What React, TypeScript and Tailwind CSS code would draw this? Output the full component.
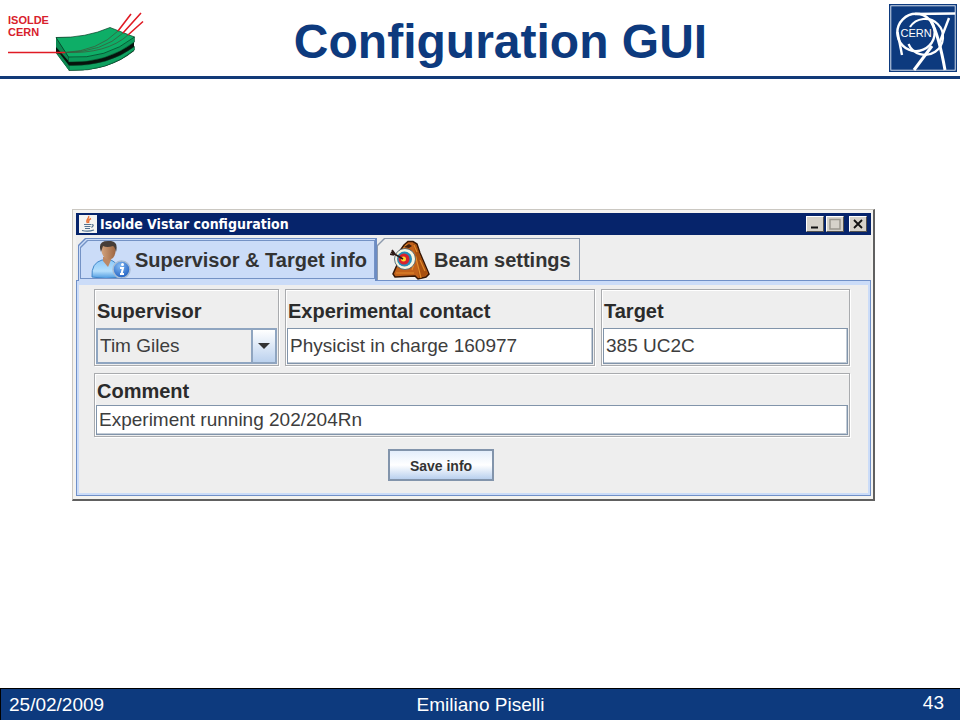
import { useState } from 'react'
import type { ReactNode } from 'react'

function IsoldeLogo() {
  return (
    <div className="relative w-40 shrink-0 pl-2 pt-3.5">
      <div className="font-bold text-[11px] leading-3 text-[#d8202c]">
        ISOLDE<br />CERN
      </div>
      <svg className="absolute left-0 top-0" width="150" height="75" viewBox="0 0 150 75" aria-hidden="true">
        <path d="M56 37.500V53L69 70.500Q108 72 134 51V37Z" fill="#07130c" />
        <path d="M69 65.500V70.500Q108 72 134.500 50V46.500Q108 66.500 69 65.500Z" fill="#0fa160" stroke="#063d24" strokeWidth=".5" />
        <path d="M68.500 57V62Q106 63.500 134.500 42V37Z" fill="#0c9a5a" stroke="#063d24" strokeWidth=".5" />
        <path d="M56 37.500V47L68.500 61V57Z" fill="#0c8a52" />
        <path d="M56 53L69 70.500V65.500L60 54Z" fill="#0c8a52" />
        <path d="M56 37.500Q86 38 110 27.500L134.500 37Q106 59.500 68.500 57Z" fill="#0eae67" stroke="#063d24" strokeWidth=".7" />
        <path d="M65 52.500Q98 51 118 31M65 52.500Q103 52 123 33M65 52.500Q107 54 128 35" fill="none" stroke="#3c5b3c" strokeWidth=".8" />
        <path d="M8 52.500H65M118 31L131 14M123 33L141 13M128 35L143 21.500" fill="none" stroke="#e01b24" strokeWidth="1.600" />
      </svg>
    </div>
  )
}

function CernLogo() {
  return (
    <svg width="68" height="68" viewBox="0 0 68 68" role="img" aria-label="CERN">
      <rect width="68" height="68" fill="#0d3a7e" />
      <rect x="1.800" y="1.800" width="64.400" height="64.400" fill="none" stroke="#e9eef7" strokeWidth=".9" />
      <g fill="none" stroke="#fff" strokeWidth="2.400">
        <circle cx="27" cy="28.500" r="18.700" />
        <path d="M21 23A18 18 0 1 1 19.500 40" strokeWidth="2.200" />
        <path d="M26 10Q42 9.500 66 9.500" />
        <path d="M8.500 28L13 51" />
        <path d="M42 17Q50 32 56 66" strokeWidth="3" />
        <path d="M60 14L50 40" />
        <path d="M43 42L25 66" strokeWidth="3" />
      </g>
      <text x="11.500" y="32.500" fill="#fff" fontSize="11" fontFamily="'Liberation Sans', Arial, sans-serif">CERN</text>
    </svg>
  )
}

function JavaIcon() {
  return (
    <svg width="18" height="18" viewBox="0 0 18 18" className="shrink-0" aria-hidden="true">
      <rect width="18" height="18" fill="#f4f4f2" />
      <path d="M9.500 1C11 3 6 5 8.500 8M12 3.500C8.500 5 10 6 9.500 8" fill="none" stroke="#e8743a" strokeWidth="1.500" />
      <path d="M5 9.500H12M5.500 11.500H11.500M6 13.500H11M12.500 9.500Q16 9.500 12.500 12.500M3 15.500Q9 17 15 15" fill="none" stroke="#53728f" strokeWidth="1.200" />
    </svg>
  )
}

function PersonIcon() {
  return (
    <svg width="40" height="40" viewBox="0 0 40 40" className="shrink-0" aria-hidden="true">
      <defs>
        <linearGradient id="shirt" x1="0" y1="0" x2="0" y2="1">
          <stop offset="0" stopColor="#8cc8f8" />
          <stop offset=".6" stopColor="#b5dffc" />
          <stop offset="1" stopColor="#4a98e0" />
        </linearGradient>
        <linearGradient id="skin" x1="0" y1="0" x2="1" y2="0">
          <stop offset="0" stopColor="#d3a47e" />
          <stop offset="1" stopColor="#9c6440" />
        </linearGradient>
        <radialGradient id="badge" cx=".4" cy=".3" r=".8">
          <stop offset="0" stopColor="#83baf3" />
          <stop offset="1" stopColor="#1555bb" />
        </radialGradient>
      </defs>
      <path d="M1 37Q0 23 11 20H20Q28 23 29 37Q15 40 1 37Z" fill="url(#shirt)" stroke="#4288ca" />
      <path d="M12 17V21L17 27L20 20V16Z" fill="#bc8865" />
      <path d="M11 5Q16 1 24 5Q26 13 22 18Q17 22 13 17Q9 12 11 5Z" fill="url(#skin)" />
      <path d="M10 12Q6 1 17 1Q28 0 25 12Q24 7 22 6Q16 8 12 6Z" fill="#463d38" />
      <circle cx="30.500" cy="29.500" r="8.500" fill="url(#badge)" stroke="#a8bdd4" strokeWidth="1.500" />
      <path d="M29 28H32L30.500 34H33M29 34H30" fill="none" stroke="#fff" strokeWidth="2" />
      <circle cx="31.500" cy="24.500" r="1.500" fill="#fff" />
    </svg>
  )
}

function TargetIcon() {
  return (
    <svg width="40" height="40" viewBox="0 0 40 40" className="shrink-0" aria-hidden="true">
      <path d="M14 5L18 1.500H23L27 4L30 13L33 20L39 34L36 37L28 39L25 36L5 37L3 34L7 25L9 12Z" fill="#c2611a" stroke="#351604" strokeWidth="1.500" />
      <path d="M23 3L26 5L30 15L38 33L35 36L29 38L27 20Z" fill="#a8500f" />
      <path d="M22 30L26 18L31 38M17 4L13 9M24 5L27 12M6 33H24M30 20L35 31" fill="none" stroke="#e28a2a" strokeWidth="1.200" />
      <path d="M14 7L19 4L22 6L19 8Z" fill="#3f2110" />
      <circle cx="15" cy="19" r="10.500" fill="#f8f5df" stroke="#3b5263" strokeWidth=".8" />
      <circle cx="14.500" cy="19" r="7.500" fill="#268db8" />
      <circle cx="14" cy="19" r="5.500" fill="#d9222c" />
      <circle cx="13.500" cy="19" r="2.500" fill="#ffd52c" />
      <path d="M1 12L13 19M0 14L4 15M2 10L5 14" stroke="#2d1a17" strokeWidth="1.700" />
    </svg>
  )
}

const CHAMFER = '[clip-path:polygon(0_7px,7px_0,100%_0,100%_100%,0_100%)]'

interface TabProps {
  selected: boolean
  icon: ReactNode
  label: string
  className: string
  onClick: () => void
}

function Tab({ selected, icon, label, className, onClick }: TabProps) {
  const inner = (
    <span className={`flex h-full items-center gap-1 ${selected ? 'bg-[#cbdcf8] pl-2.5' : 'bg-[#eee] pl-3'} ${CHAMFER}`}>
      {icon}
      <span className="pt-px leading-6">{label}</span>
    </span>
  )
  return (
    <button
      type="button"
      role="tab"
      aria-selected={selected}
      onClick={onClick}
      className={`block shrink-0 pb-0 pl-px pt-px text-[20px] font-bold text-[#333] ${className} ${CHAMFER} ${selected ? 'relative z-10 h-[43px] bg-[#6c8cc4] pr-0.5' : 'h-[42px] bg-[#8d9aad] pr-px'}`}
    >
      {selected ? (
        <span className={`block h-full bg-[#cbdcf8] pl-px pt-px ${CHAMFER}`}>
          <span className={`block h-[39px] bg-[#7492c5] p-px ${CHAMFER}`}>{inner}</span>
        </span>
      ) : inner}
    </button>
  )
}

const GROUP = 'border border-[#a9abae] p-px shadow-[1px_1px_0_#fff,inset_1px_1px_0_#fff]'
const LABEL = 'flex items-center pt-0.5 pl-px text-[20px] font-bold leading-6 text-[#2b2b2b]'
const INPUT = 'block w-full min-w-0 border border-[#8194aa] bg-white px-0.5 text-[19px] text-[#3d3d3d] shadow-[inset_-1px_-1px_0_#c3ccd6] outline-none'

interface FieldProps {
  id: string
  label: string
  value: string
}

function Field({ id, label, value }: FieldProps) {
  return (
    <div className={GROUP}>
      <label htmlFor={id} className={`${LABEL} h-[37px]`}>{label}</label>
      <input id={id} defaultValue={value} className={`${INPUT} h-9`} />
    </div>
  )
}

function WindowButton({ label, children }: { label: string; children: ReactNode }) {
  return (
    <button
      type="button"
      aria-label={label}
      className="flex h-4 w-[18px] items-center justify-center border border-b-[#55524d] border-l-white border-r-[#55524d] border-t-white bg-[#d6d2ca]"
    >
      <svg width="12" height="12" viewBox="0 0 12 12" fill="none" aria-hidden="true">{children}</svg>
    </button>
  )
}

function ConfigWindow() {
  const [tab, setTab] = useState('info')

  return (
    <div className="border-b-2 border-l border-r-2 border-t border-b-[#606060] border-l-[#cbc8c2] border-r-[#606060] border-t-[#cbc8c2] bg-[#f4f3f0] pb-[3px] pl-[3px] pr-0.5 pt-[3px]">
      <div className="flex h-[22px] items-center bg-[#06246b] pl-[3px] pr-1">
        <JavaIcon />
        <h2 className="flex-1 pl-[3px] font-['DejaVu_Sans_Condensed','DejaVu_Sans',sans-serif] text-[14px] font-bold leading-4 text-white">
          Isolde Vistar configuration
        </h2>
        <div className="flex gap-0.5">
          <WindowButton label="Minimize"><path d="M2 9.500H9" stroke="#111" strokeWidth="2" /></WindowButton>
          <WindowButton label="Maximize"><path d="M1 1.500H11V11H1Z" stroke="#9a978e" strokeWidth="1.500" /></WindowButton>
          <span className="w-px" />
          <WindowButton label="Close"><path d="M2 2L10 10M10 2L2 10" stroke="#111" strokeWidth="1.800" /></WindowButton>
        </div>
      </div>

      <div className="bg-[#eee] pt-[3px]">
        <div role="tablist" className="flex h-[42px] items-start pl-0.5">
          <Tab className="w-[299px]" selected={tab === 'info'} icon={<PersonIcon />} label="Supervisor &amp; Target info" onClick={() => setTab('info')} />
          <Tab className="w-[203px]" selected={tab === 'beam'} icon={<TargetIcon />} label="Beam settings" onClick={() => setTab('beam')} />
        </div>

        <div className="border border-[#7090c8] bg-[#eee]">
          <form className="border-x-2 border-b-2 border-t-4 border-[#cbdcf8] pb-3 pl-[15px] pr-[18px] pt-1" onSubmit={(e) => e.preventDefault()}>
            <div className="grid grid-cols-[185fr_310fr_249fr] gap-x-1.5">
              <div className={GROUP}>
                <label htmlFor="supervisor" className={`${LABEL} h-[37px]`}>Supervisor</label>
                <div className="relative">
                  <select
                    id="supervisor"
                    className="block h-9 w-full appearance-none border-2 border-[#8fa5c0] bg-[#eee] pl-0.5 text-[19px] text-[#3d3d3d] outline-none"
                  >
                    <option>Tim Giles</option>
                  </select>
                  <span className="pointer-events-none absolute inset-y-0 right-0 flex w-[26px] items-center justify-center border-2 border-[#8fa5c0] bg-linear-to-b from-white to-[#bcd2ee]">
                    <svg width="12" height="6" viewBox="0 0 12 6" aria-hidden="true"><path d="M0 0H12L6 6Z" fill="#333" /></svg>
                  </span>
                </div>
              </div>
              <Field id="contact" label="Experimental contact" value="Physicist in charge 160977" />
              <Field id="target" label="Target" value="385 UC2C" />
            </div>

            <div className={`${GROUP} mt-[7px]`}>
              <label htmlFor="comment" className={`${LABEL} h-[30px]`}>Comment</label>
              <input id="comment" defaultValue="Experiment running 202/204Rn" className={`${INPUT} h-[30px]`} />
            </div>

            <div className="mt-3 pl-[294px]">
              <button
                type="submit"
                className="block h-8 w-[106px] border-2 border-[#8294ab] bg-linear-to-b from-[#e4eefb] via-white to-[#b9d0ee] pt-0.5 text-[14px] font-bold text-[#333]"
              >
                Save info
              </button>
            </div>
          </form>
        </div>
      </div>
    </div>
  )
}

export default function App() {
  return (
    <div className="flex min-h-screen flex-col bg-white font-['Liberation_Sans',Arial,sans-serif]">
      <header className="flex h-[79px] border-b-3 border-[#113a78]">
        <IsoldeLogo />
        <h1 className="flex-1 pt-3 text-center text-[48px] font-bold leading-[60px] text-[#0d3a7e]">Configuration GUI</h1>
        <div className="flex w-[119px] shrink-0 items-start justify-end pr-[3px] pt-1">
          <CernLogo />
        </div>
      </header>

      <main className="flex-1 pb-8 pl-[72px] pr-[85px] pt-[130px]">
        <ConfigWindow />
      </main>

      <footer className="grid h-8 grid-cols-[1fr_auto_1fr] items-center border-l border-t border-black bg-[#0d3a7e] px-2 text-[19px] leading-6 text-white">
        <span>25/02/2009</span>
        <span>Emiliano Piselli</span>
        <span className="pb-1 pr-2 text-right">43</span>
      </footer>
    </div>
  )
}
